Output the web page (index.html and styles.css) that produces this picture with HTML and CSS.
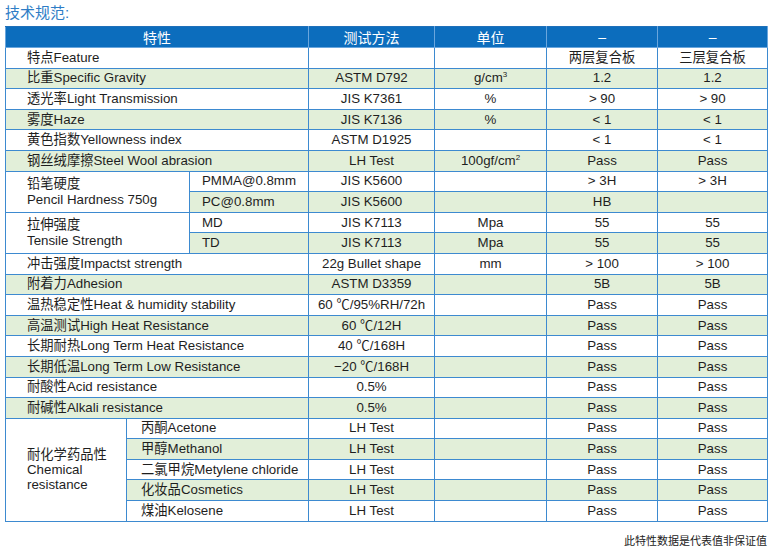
FILE: index.html
```html
<!DOCTYPE html>
<html lang="zh">
<head>
<meta charset="utf-8">
<title>技术规范</title>
<link rel="stylesheet" href="styles.css">
</head>
<body>
<div class="page">
  <div class="title">技术规范:</div>
  <table class="spec">
    <colgroup>
      <col class="c-a"><col class="c-b"><col class="c-c"><col class="c-d"><col class="c-e"><col class="c-f"><col class="c-g">
    </colgroup>
    <thead>
      <tr><th colspan="3">特性</th><th>测试方法</th><th>单位</th><th>–</th><th>–</th></tr>
    </thead>
    <tbody>
      <tr><td colspan="3" class="name">特点Feature</td><td></td><td></td><td>两层复合板</td><td>三层复合板</td></tr>
      <tr class="g"><td colspan="3" class="name">比重Specific Gravity</td><td>ASTM D792</td><td>g/cm<sup>3</sup></td><td>1.2</td><td>1.2</td></tr>
      <tr><td colspan="3" class="name">透光率Light Transmission</td><td>JIS K7361</td><td>%</td><td>&gt; 90</td><td>&gt; 90</td></tr>
      <tr class="g"><td colspan="3" class="name">雾度Haze</td><td>JIS K7136</td><td>%</td><td>&lt; 1</td><td>&lt; 1</td></tr>
      <tr><td colspan="3" class="name">黄色指数Yellowness index</td><td>ASTM D1925</td><td></td><td>&lt; 1</td><td>&lt; 1</td></tr>
      <tr class="g"><td colspan="3" class="name">钢丝绒摩擦Steel Wool abrasion</td><td>LH Test</td><td>100gf/cm<sup>2</sup></td><td>Pass</td><td>Pass</td></tr>
      <tr><td colspan="2" rowspan="2" class="name merged">铅笔硬度<br>Pencil Hardness 750g</td><td class="sub">PMMA@0.8mm</td><td>JIS K5600</td><td></td><td>&gt; 3H</td><td>&gt; 3H</td></tr>
      <tr class="g"><td class="sub">PC@0.8mm</td><td>JIS K5600</td><td></td><td>HB</td><td></td></tr>
      <tr><td colspan="2" rowspan="2" class="name merged">拉伸强度<br>Tensile Strength</td><td class="sub">MD</td><td>JIS K7113</td><td>Mpa</td><td>55</td><td>55</td></tr>
      <tr class="g"><td class="sub">TD</td><td>JIS K7113</td><td>Mpa</td><td>55</td><td>55</td></tr>
      <tr><td colspan="3" class="name">冲击强度Impactst strength</td><td>22g Bullet shape</td><td>mm</td><td>&gt; 100</td><td>&gt; 100</td></tr>
      <tr class="g"><td colspan="3" class="name">附着力Adhesion</td><td>ASTM D3359</td><td></td><td>5B</td><td>5B</td></tr>
      <tr><td colspan="3" class="name">温热稳定性Heat &amp; humidity stability</td><td>60 ℃/95%RH/72h</td><td></td><td>Pass</td><td>Pass</td></tr>
      <tr class="g"><td colspan="3" class="name">高温测试High Heat Resistance</td><td>60 ℃/12H</td><td></td><td>Pass</td><td>Pass</td></tr>
      <tr><td colspan="3" class="name">长期耐热Long Term Heat Resistance</td><td>40 ℃/168H</td><td></td><td>Pass</td><td>Pass</td></tr>
      <tr class="g"><td colspan="3" class="name">长期低温Long Term Low Resistance</td><td>−20 ℃/168H</td><td></td><td>Pass</td><td>Pass</td></tr>
      <tr><td colspan="3" class="name">耐酸性Acid resistance</td><td>0.5%</td><td></td><td>Pass</td><td>Pass</td></tr>
      <tr class="g"><td colspan="3" class="name">耐碱性Alkali resistance</td><td>0.5%</td><td></td><td>Pass</td><td>Pass</td></tr>
      <tr><td rowspan="5" class="name merged chem">耐化学药品性<br>Chemical<br>resistance</td><td colspan="2" class="sub2">丙酮Acetone</td><td>LH Test</td><td></td><td>Pass</td><td>Pass</td></tr>
      <tr class="g"><td colspan="2" class="sub2">甲醇Methanol</td><td>LH Test</td><td></td><td>Pass</td><td>Pass</td></tr>
      <tr><td colspan="2" class="sub2">二氯甲烷Metylene chloride</td><td>LH Test</td><td></td><td>Pass</td><td>Pass</td></tr>
      <tr class="g"><td colspan="2" class="sub2">化妆品Cosmetics</td><td>LH Test</td><td></td><td>Pass</td><td>Pass</td></tr>
      <tr><td colspan="2" class="sub2">煤油Kelosene</td><td>LH Test</td><td></td><td>Pass</td><td>Pass</td></tr>
    </tbody>
  </table>
  <div class="note">此特性数据是代表值非保证值</div>
</div>
</body>
</html>
```
FILE: styles.css
```css
html, body {
  margin: 0;
  padding: 0;
  background: #ffffff;
}
body {
  font-family: "Liberation Sans", "Noto Sans CJK SC", sans-serif;
  color: #1e1e1e;
}
.page {
  padding: 3px 5px 0 5px;
  width: 762px;
}
.title {
  font-size: 15px;
  line-height: 20px;
  height: 23px;
  color: #2e7dc6;
}
.spec {
  border-collapse: collapse;
  table-layout: fixed;
  width: 762px;
  font-size: 13.3px;
  border: 1px solid #1f70b9;
}
.c-a { width: 121px; }
.c-b { width: 63px; }
.c-c { width: 119px; }
.c-d { width: 126px; }
.c-e { width: 112px; }
.c-f { width: 111px; }
.c-g { width: 110px; }
.spec th {
  background: #0c6dbd;
  color: #ffffff;
  font-weight: normal;
  font-size: 14px;
  height: 20px;
  padding: 0;
  border: 1px solid #6aa6dd;
  border-top-color: #1f70b9;
  text-align: center;
}
.spec td {
  height: 19.6px;
  padding: 0;
  border: 1px solid #3d8ad0;
  text-align: center;
  white-space: nowrap;
  line-height: 16px;
}
.spec tr.g td {
  background: #e2efd9;
}
.spec td.name {
  text-align: left;
  padding-left: 21px;
}
.spec td.sub {
  text-align: left;
  padding-left: 12px;
}
.spec td.sub2 {
  text-align: left;
  padding-left: 14px;
}
.spec td.merged {
  background: #ffffff;
  line-height: 16px;
}
.spec td.chem {
  line-height: 15px;
}
.spec sup {
  font-size: 8px;
  line-height: 0;
  vertical-align: 5px;
}
.note {
  text-align: right;
  font-size: 11px;
  line-height: 14px;
  margin-top: 12px;
  color: #222;
}
```
